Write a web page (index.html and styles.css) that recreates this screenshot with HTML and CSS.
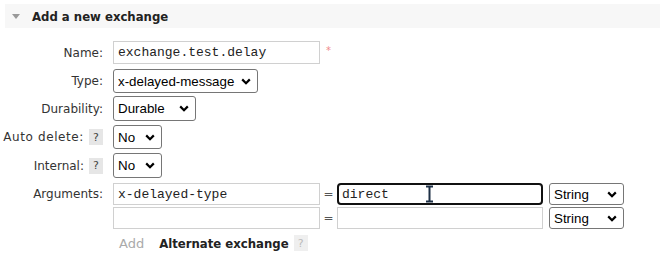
FILE: index.html
```html
<!DOCTYPE html>
<html>
<head>
<meta charset="utf-8">
<link rel="stylesheet" href="styles.css">
</head>
<body>
<div class="section">
  <div class="section-head">
    <span class="tri"></span>
    <h2 class="title">Add a new exchange</h2>
  </div>
  <div class="form">
    <div class="row r-name">
      <label class="lbl">Name:</label>
      <div class="field">
        <input class="txt w207" type="text" value="exchange.test.delay">
        <span class="req">*</span>
      </div>
    </div>
    <div class="row r-type">
      <label class="lbl">Type:</label>
      <div class="field">
        <select class="sel w145"><option>x-delayed-message</option></select>
      </div>
    </div>
    <div class="row r-dur">
      <label class="lbl">Durability:</label>
      <div class="field">
        <select class="sel w83"><option>Durable</option></select>
      </div>
    </div>
    <div class="row r-auto">
      <label class="lbl"><span class="wide">Auto delete:</span> <span class="help">?</span></label>
      <div class="field">
        <select class="sel w49"><option>No</option></select>
      </div>
    </div>
    <div class="row r-int">
      <label class="lbl">Internal: <span class="help">?</span></label>
      <div class="field">
        <select class="sel w49"><option>No</option></select>
      </div>
    </div>
    <div class="row r-arg1">
      <label class="lbl">Arguments:</label>
      <div class="field args">
        <input class="txt w207 h22" type="text" value="x-delayed-type">
        <span class="eq">=</span>
        <div class="val-wrap">
          <input class="txt w206 h22 focused" type="text" value="direct">
          <svg class="ibeam" width="9" height="18" viewBox="0 0 9 18">
            <path d="M1 1.5 H8 M4.5 1.5 V16.5 M1 16.5 H8" stroke="#1d2f45" stroke-width="2" fill="none"/>
          </svg>
        </div>
        <select class="sel w75 h22"><option>String</option></select>
      </div>
    </div>
    <div class="row r-arg2">
      <label class="lbl"></label>
      <div class="field args">
        <input class="txt w207 h22" type="text" value="">
        <span class="eq">=</span>
        <div class="val-wrap">
          <input class="txt w206 h22" type="text" value="">
        </div>
        <select class="sel w75 h22"><option>String</option></select>
      </div>
    </div>
    <div class="row r-add">
      <label class="lbl"></label>
      <div class="field addrow">
        <span class="add">Add</span>
        <span class="alt">Alternate exchange</span>
        <span class="help help-light">?</span>
      </div>
    </div>
  </div>
</div>
</body>
</html>
```

FILE: styles.css
```css
html, body {
  margin: 0;
  padding: 0;
  background: #fff;
}

body {
  font-family: "DejaVu Sans", Verdana, sans-serif;
  font-size: 12px;
  color: #484848;
  width: 660px;
  height: 254px;
  overflow: hidden;
}

.section {
  padding-top: 4px;
}

.section-head {
  margin-left: 5px;
  height: 24px;
  background: #f7f7f7;
  display: flex;
  align-items: center;
}

.tri {
  width: 0;
  height: 0;
  margin-left: 7px;
  margin-right: 12px;
  border-left: 4px solid transparent;
  border-right: 4px solid transparent;
  border-top: 5px solid #999;
}

.title {
  margin: 0;
  font-family: "DejaVu Sans Condensed", "DejaVu Sans", sans-serif;
  font-weight: bold;
  font-size: 13px;
  color: #222;
}

.form {
  display: grid;
  grid-template-columns: 103px 1fr;
  grid-template-rows: 28px 27px 29px 28px 30px 24px 26px 24px;
  column-gap: 10px;
  margin-top: 13px;
}

.row {
  display: contents;
}

.lbl {
  grid-column: 1;
  text-align: right;
  align-self: start;
  white-space: nowrap;
  color: #333;
  display: flex;
  justify-content: flex-end;
  align-items: center;
}

.wide {
  letter-spacing: 0.6px;
}

.field {
  grid-column: 2;
  align-self: start;
  display: flex;
  align-items: center;
}

.r-name .lbl { height: 23px; }
.r-type .lbl { height: 24px; }
.r-dur .lbl { height: 25px; }
.r-auto .lbl { height: 24px; }
.r-int .lbl { height: 25px; }
.r-arg1 .lbl { height: 22px; }

.txt {
  box-sizing: border-box;
  height: 23px;
  border: 1px solid #d0d0d0;
  border-radius: 0;
  padding: 0 4px;
  margin: 0;
  font-family: "Liberation Mono", "Courier New", monospace;
  font-size: 13px;
  color: #222;
  background: #fff;
  outline: none;
}

.h22 { height: 22px; }

.focused {
  border: 2px solid #111;
  border-radius: 4px;
  padding: 0 3px;
}

.w207 { width: 207px; }
.w206 { width: 206px; }
.w145 { width: 145px; }
.w83 { width: 83px; }
.w75 { width: 75px; }
.w49 { width: 49px; }

.req {
  color: #f08a8a;
  font-size: 10px;
  margin-left: 6px;
  align-self: flex-start;
  margin-top: 4px;
}

.sel {
  box-sizing: border-box;
  height: 25px;
  margin: 0;
  border: 1px solid #767676;
  border-radius: 3px;
  padding: 0 20px 0 4px;
  font-family: "Liberation Sans", Arial, sans-serif;
  font-size: 13.33px;
  color: #000;
  -webkit-appearance: none;
  appearance: none;
  background-color: #fff;
  background-image: url("data:image/svg+xml;utf8,<svg xmlns='http://www.w3.org/2000/svg' width='10' height='7' viewBox='0 0 10 7'><path d='M1.2 1.4 L5 5.2 L8.8 1.4' stroke='black' stroke-width='2.2' fill='none'/></svg>");
  background-repeat: no-repeat;
  background-position: right 6px center;
}

.r-type .sel { height: 24px; }
.r-auto .sel { height: 24px; }
.sel.h22 { height: 22px; }

.help {
  display: inline-flex;
  align-items: center;
  justify-content: center;
  width: 14px;
  height: 16px;
  margin-left: 5px;
  background: #e6e6e6;
  color: #444;
  font-size: 11px;
}

.help-light {
  background: #efefef;
  color: #bbb;
  margin-left: 5px;
}

.args .eq {
  width: 17px;
  text-align: center;
  color: #555;
  font-size: 12px;
}

.val-wrap {
  position: relative;
  display: flex;
}

.ibeam {
  position: absolute;
  left: 88px;
  top: 2px;
}

.args .sel {
  margin-left: 6px;
}

.addrow {
  height: 24px;
  margin-top: -2px;
}

.add {
  color: #aaa;
  font-size: 13px;
  margin-left: 6px;
}

.alt {
  margin-left: 15px;
  font-family: "DejaVu Sans Condensed", "DejaVu Sans", sans-serif;
  font-weight: bold;
  font-size: 13px;
  color: #222;
}
```
